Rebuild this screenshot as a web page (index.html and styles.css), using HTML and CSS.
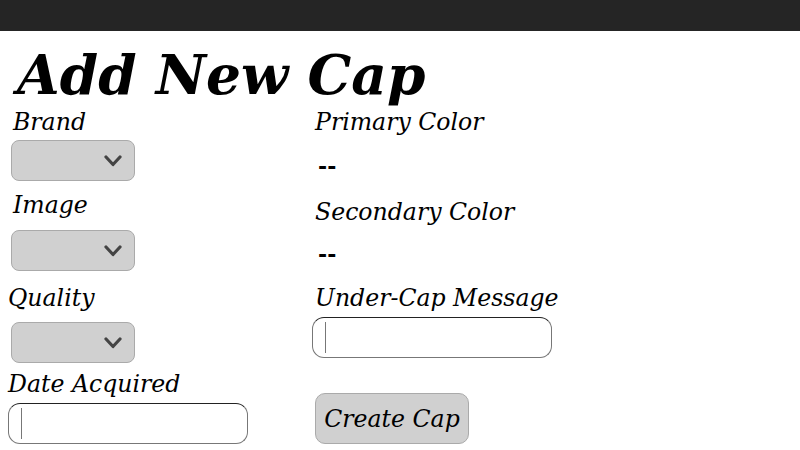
FILE: index.html
```html
<!DOCTYPE html>
<html lang="en">
<head>
<meta charset="utf-8">
<title>Add New Cap</title>
<link rel="stylesheet" href="styles.css">
</head>
<body>
<header class="topbar"></header>
<main class="page">
  <h1 class="title">Add New Cap</h1>
  <form class="form">
    <div class="col col-left">
      <label class="label label-brand">Brand</label>
      <div class="select-wrap sw-brand">
        <select class="select"></select>
        <svg class="chev" width="18" height="12" viewBox="0 0 18 12"><polyline points="2,2 9,9.5 16,2" fill="none" stroke="#444" stroke-width="3.2" stroke-linecap="round" stroke-linejoin="round"/></svg>
      </div>
      <label class="label label-image">Image</label>
      <div class="select-wrap sw-image">
        <select class="select"></select>
        <svg class="chev" width="18" height="12" viewBox="0 0 18 12"><polyline points="2,2 9,9.5 16,2" fill="none" stroke="#444" stroke-width="3.2" stroke-linecap="round" stroke-linejoin="round"/></svg>
      </div>
      <label class="label label-quality">Quality</label>
      <div class="select-wrap sw-quality">
        <select class="select"></select>
        <svg class="chev" width="18" height="12" viewBox="0 0 18 12"><polyline points="2,2 9,9.5 16,2" fill="none" stroke="#444" stroke-width="3.2" stroke-linecap="round" stroke-linejoin="round"/></svg>
      </div>
      <label class="label label-date">Date Acquired</label>
      <input class="text-input input-date" type="text">
    </div>
    <div class="col col-right">
      <label class="label label-primary">Primary Color</label>
      <p class="value value-primary">--</p>
      <label class="label label-secondary">Secondary Color</label>
      <p class="value value-secondary">--</p>
      <label class="label label-message">Under-Cap Message</label>
      <input class="text-input input-message" type="text">
      <button class="btn" type="button">Create Cap</button>
    </div>
  </form>
</main>
</body>
</html>
```
FILE: styles.css
```css
* { box-sizing: border-box; }
html, body { margin: 0; padding: 0; background: #fff; }
body {
  font-family: "DejaVu Serif", serif;
  font-style: italic;
  color: #000;
  overflow: hidden;
}
.topbar {
  height: 31px;
  background: #252525;
}
.page {
  padding: 0 8px;
}
.title {
  margin: 0;
  padding: 12px 0 0 9px;
  font-size: 55px;
  font-weight: bold;
  line-height: 64px;
}
.form {
  display: grid;
  grid-template-columns: 304px 1fr;
  margin-top: 1px;
}
.col {
  display: flex;
  flex-direction: column;
  align-items: flex-start;
}
.label {
  display: block;
  font-size: 23.6px;
  line-height: 28px;
}
.label-brand { margin: 0 0 0 5px; }
.label-image { margin: 10px 0 0 5px; }
.label-quality { margin: 13px 0 0 0; }
.label-date { margin: 7px 0 0 0; }

.select-wrap {
  position: relative;
  margin-left: 3px;
}
.sw-brand { margin-top: 4px; }
.sw-image { margin-top: 11px; }
.sw-quality { margin-top: 10px; }
.select {
  appearance: none;
  -webkit-appearance: none;
  display: block;
  width: 124px;
  height: 41px;
  margin: 0;
  background: #d0d0d0;
  border: 1px solid #aaa;
  border-radius: 8px;
}
.chev {
  position: absolute;
  right: 13px;
  top: 15px;
}
.text-input {
  display: block;
  width: 240px;
  height: 41px;
  margin: 0;
  border: 1px solid #777;
  border-top-color: #222;
  border-radius: 12px;
  background: linear-gradient(to right, transparent 12px, #777 12px, #777 13px, transparent 13px) no-repeat 0 4px / 100% 31px, #fff;
}
.input-date { margin-top: 5px; }

.label-primary { margin: 0 0 0 3px; }
.label-secondary { margin: 19px 0 0 3px; }
.label-message { margin: 17px 0 0 3px; }
.value {
  margin: 0 0 0 6px;
  font-size: 22px;
  font-weight: bold;
  font-style: normal;
  line-height: 26px;
}
.value-primary { margin-top: 17px; }
.value-secondary { margin-top: 15px; }
.input-message { margin-top: 5px; }
.btn {
  margin: 35px 0 0 3px;
  width: 154px;
  height: 51px;
  padding: 0;
  background: #d0d0d0;
  border: 1px solid #aaa;
  border-radius: 10px;
  font-family: "DejaVu Serif", serif;
  font-style: italic;
  font-size: 23.6px;
  color: #000;
}
```
